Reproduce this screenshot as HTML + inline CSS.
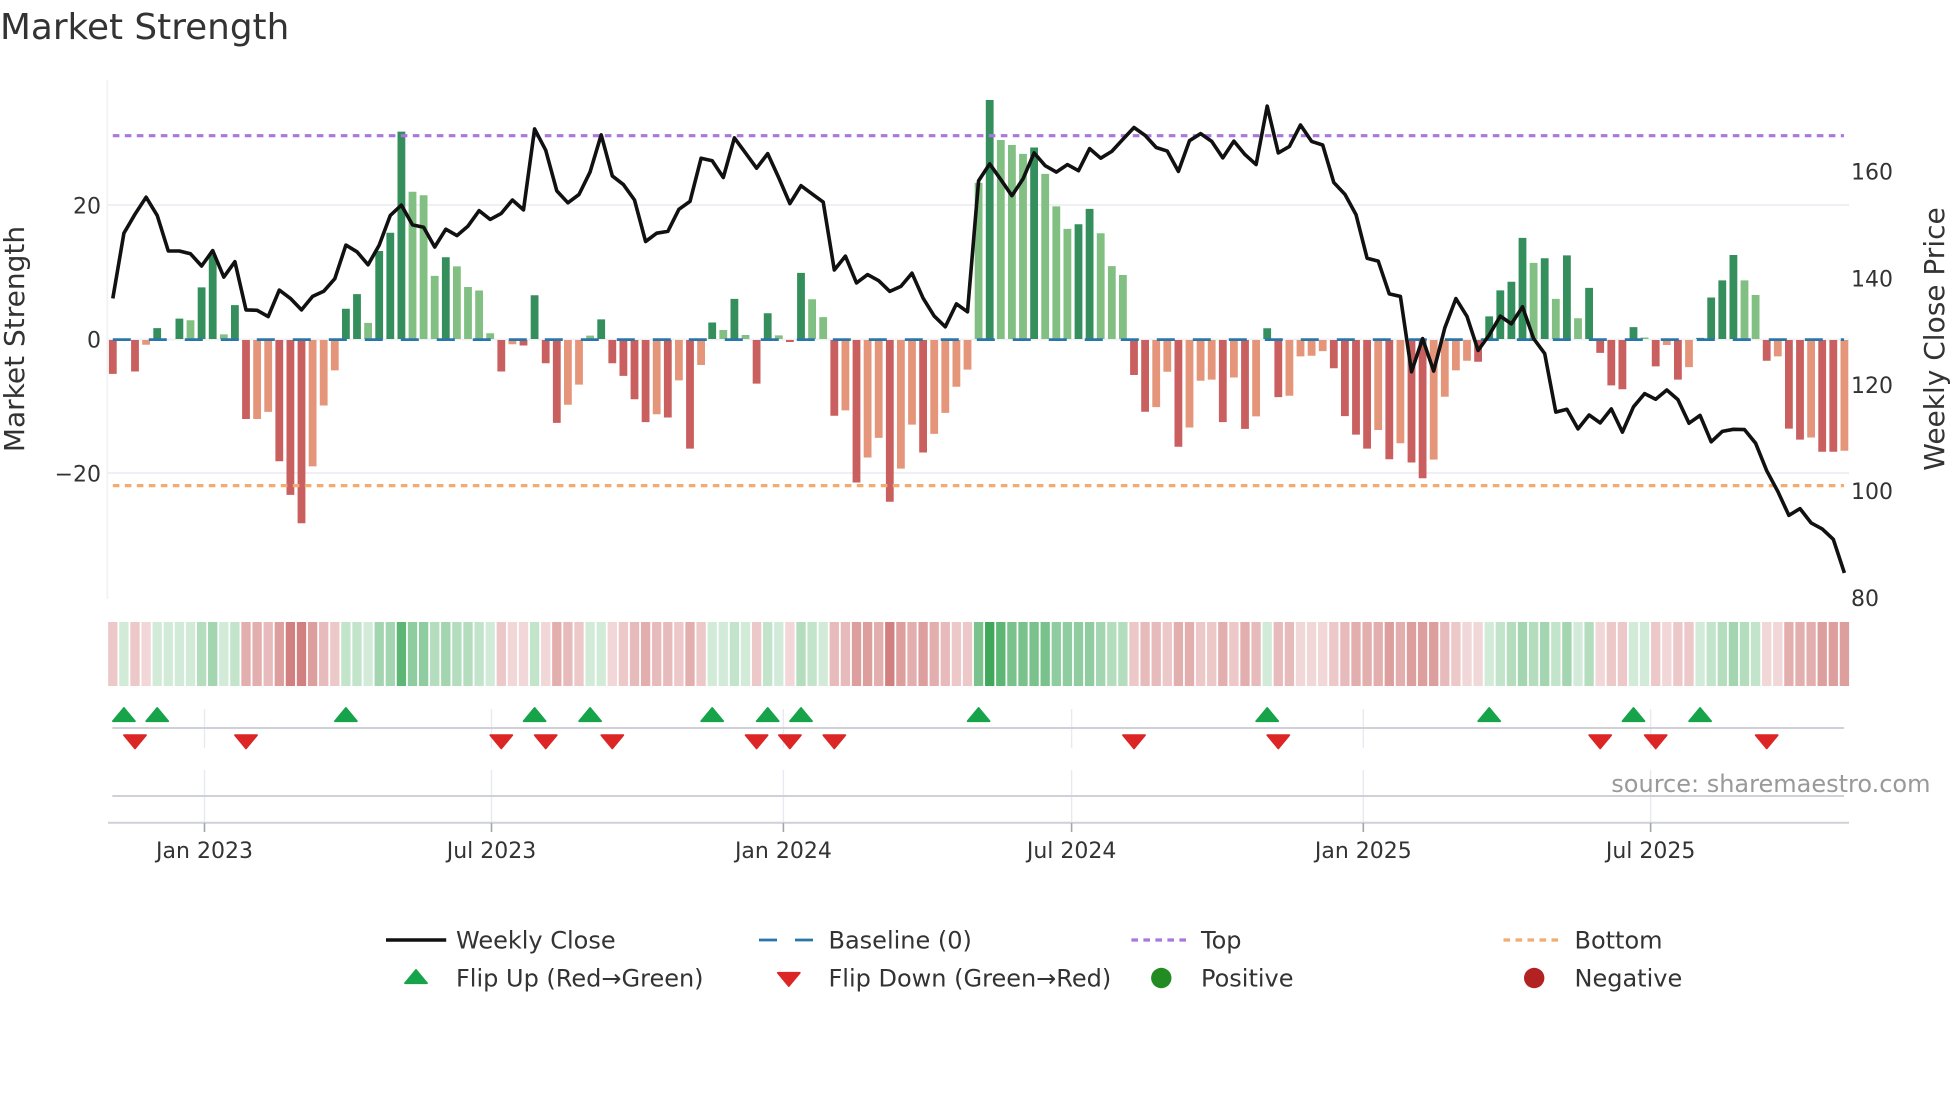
<!DOCTYPE html>
<html><head><meta charset="utf-8"><title>Market Strength</title>
<style>
html,body{margin:0;padding:0;background:#fff;width:1960px;height:1102px;overflow:hidden}
svg{display:block}
text{font-family:"DejaVu Sans","Liberation Sans",sans-serif}
</style></head><body>
<svg width="1960" height="1102" viewBox="0 0 1960 1102" xmlns="http://www.w3.org/2000/svg">
<rect width="1960" height="1102" fill="#fff"/>
<text x="0" y="39" font-size="35.8" fill="#333">Market Strength</text>

<!-- grid -->
<path d="M107.3 80V599" stroke="#f0f1f3" stroke-width="1.7" fill="none"/>
<path d="M107 205H1849M107 473H1849M107 339.5H1849" stroke="#eef0f5" stroke-width="2" fill="none"/>

<!-- bars -->
<g transform="translate(112.8 0) scale(11.1 1)" fill="none" stroke-width=".703">
<path stroke="#2e8b57" stroke-opacity=".97" d="M4 339V328.1M6 339V318.6M8 339V287.4M9 339V254.9M11 339V305.1M21 339V308.7M22 339V294.1M24 339V251M25 339V232.8M26 339V131.6M30 339V257.3M38 339V295.3M44 339V319.4M54 339V322.5M56 339V298.9M59 339V313.2M62 339V272.9M79 339V100M83 339V147.5M87 339V224.3M88 339V208.9M104 339V328.2M124 339V316.4M125 339V290.4M126 339V281.8M127 339V237.9M129 339V258.2M131 339V255.4M133 339V287.9M137 339V327.1M143 339V337.9M144 339V297.5M145 339V280.4M146 339V255"/>
<path stroke="#82bf82" d="M7 339V320.2M10 339V334.4M23 339V322.9M27 339V191.7M28 339V195.3M29 339V275.9M31 339V266.4M32 339V287M33 339V290.5M34 339V333.2M43 339V335.6M55 339V330M57 339V335M60 339V335.4M63 339V299.3M64 339V317.1M78 339V182.9M80 339V140M81 339V145M82 339V153.9M84 339V173.9M85 339V206.4M86 339V228.9M89 339V233.2M90 339V266.1M91 339V275M128 339V262.9M130 339V298.9M132 339V318.2M138 339V337.5M147 339V280.4M148 339V295"/>
<path stroke="#c95f5f" d="M0 340V373.9M2 340V371.5M12 340V419M15 340V461.3M16 340V494.9M17 340V523.3M35 340V371.5M37 340V345.5M39 340V363.2M40 340V422.9M45 340V363.2M46 340V375.9M47 340V399.2M48 340V422.1M50 340V417.5M52 340V448.6M58 340V383.6M61 340V342M65 340V415.7M67 340V482.5M70 340V501.8M73 340V452.5M92 340V375M93 340V411.8M96 340V446.8M100 340V422.1M102 340V428.9M105 340V397.1M110 340V368.2M111 340V416.1M112 340V434.6M113 340V448.6M115 340V459.3M117 340V462.5M118 340V478.2M123 340V361.8M134 340V352.9M135 340V385.4M136 340V389.3M139 340V366.4M141 340V379.6M149 340V360.7M151 340V428.6M152 340V439.6M154 340V451.8M155 340V451.8"/>
<path stroke="#e5967a" d="M3 340V344.7M13 340V419M14 340V411.9M18 340V466.4M19 340V405.5M20 340V370.4M36 340V344.3M41 340V404.7M42 340V384.6M49 340V414.2M51 340V380.4M53 340V365M66 340V410.4M68 340V457.5M69 340V437.9M71 340V468.6M72 340V424.6M74 340V433.9M75 340V412.9M76 340V386.8M77 340V369.6M94 340V407.1M95 340V371.8M97 340V427.5M98 340V380.7M99 340V379.6M101 340V377.5M103 340V416.4M106 340V395.7M107 340V356.4M108 340V355.7M109 340V351.1M114 340V430M116 340V443.2M119 340V459.6M120 340V396.8M121 340V370.4M122 340V360.7M140 340V345M142 340V367.1M150 340V356.4M153 340V437.5M156 340V450.7"/>
</g>

<!-- baseline & thresholds -->
<path d="M112.8 339.6H1844" stroke="#2a76a8" stroke-width="2.8" stroke-dasharray="18 18" fill="none"/>
<path d="M112.8 135.7H1844" stroke="#a878dc" stroke-width="3.2" stroke-dasharray="6.6 5.4" fill="none"/>
<path d="M112.8 485.6H1844" stroke="#f2ab70" stroke-width="3.2" stroke-dasharray="6.6 5.4" fill="none"/>

<!-- price line -->
<polyline transform="translate(112.8 0) scale(11.1 1)" vector-effect="non-scaling-stroke" fill="none" stroke="#111" stroke-width="3.6" stroke-linejoin="round" points="0,298.4 1,233.2 2,214.2 3,197.2 4,215.4 5,251 6,251 7,253.8 8,266 9,250.6 10,277.1 11,261.7 12,309.9 13,310.3 14,316.6 15,290.1 16,298.4 17,309.9 18,296.4 19,291.3 20,278.7 21,245.1 22,251.8 23,264.8 24,245.1 25,215.4 26,205.1 27,224.9 28,227.3 29,247 30,229.2 31,235.6 32,226.1 33,210.7 34,219.4 35,213.4 36,200 37,209.9 38,128.9 39,150.2 40,190.9 41,202.8 42,194.5 43,171.9 44,134.8 45,175.9 46,184.6 47,200 48,241.5 49,233.2 50,231.4 51,209.3 52,201.4 53,158.2 54,160.7 55,177.5 56,137.9 57,152.9 58,168.2 59,153.6 60,177.9 61,203.6 62,185.7 63,193.9 64,202.1 65,270 66,256.1 67,282.9 68,274.6 69,280.7 70,291.4 71,286.4 72,273.2 73,298.2 74,316.1 75,326.8 76,303.9 77,311.8 78,180.7 79,163.9 80,179.6 81,195.7 82,178.9 83,152.9 84,165.7 85,172.1 86,164.6 87,170.7 88,148.6 89,158.2 90,151.4 91,139.3 92,127.5 93,135.4 94,147.5 95,151.1 96,171.4 97,140.7 98,133.6 99,141.4 100,157.9 101,141.1 102,154.6 103,164.6 104,106.1 105,152.9 106,146.4 107,125 108,141.4 109,145 110,182.5 111,194.3 112,214.6 113,258.2 114,261.1 115,293.9 116,296.4 117,371.8 118,338.6 119,371.1 120,327.9 121,298.6 122,316.4 123,350.4 124,335 125,316.1 126,323.9 127,306.8 128,338.6 129,353.6 130,412.1 131,409.3 132,428.9 133,415 134,422.9 135,408.9 136,432.1 137,406.8 138,393.6 139,399.3 140,390 141,399.6 142,423.2 143,415.4 144,441.8 145,431.4 146,429.3 147,429.6 148,443.2 149,470.7 150,491.4 151,515.4 152,508.6 153,522.9 154,528.9 155,539.3 156,572.9"/>

<!-- left y ticks -->
<g font-size="22" fill="#333" text-anchor="end">
<text x="101" y="213.5">20</text>
<text x="101" y="347.5">0</text>
<text x="101" y="481.5">−20</text>
</g>
<text transform="translate(24 339) rotate(-90)" font-size="28" fill="#333" text-anchor="middle">Market Strength</text>

<!-- right y ticks -->
<g font-size="22" fill="#333">
<text x="1851" y="179.3">160</text>
<text x="1851" y="286.3">140</text>
<text x="1851" y="392.8">120</text>
<text x="1851" y="499">100</text>
<text x="1851" y="606">80</text>
</g>
<text transform="translate(1944 339) rotate(-90)" font-size="28" fill="#333" text-anchor="middle">Weekly Close Price</text>

<!-- heat strip -->
<g transform="translate(112.8 0) scale(11.1 1)" fill="none" stroke-width=".84">
<g stroke="#b22222">
<path stroke-opacity=".18" d="M3 622V686M36 622V686M37 622V686M39 622V686M45 622V686M61 622V686M107 622V686M108 622V686M109 622V686M122 622V686M123 622V686M134 622V686M140 622V686M149 622V686M150 622V686"/>
<path stroke-opacity=".25" d="M0 622V686M2 622V686M20 622V686M35 622V686M42 622V686M46 622V686M51 622V686M53 622V686M58 622V686M76 622V686M77 622V686M92 622V686M95 622V686M98 622V686M99 622V686M101 622V686M110 622V686M121 622V686M135 622V686M136 622V686M139 622V686M141 622V686M142 622V686"/>
<path stroke-opacity=".31" d="M14 622V686M19 622V686M41 622V686M47 622V686M49 622V686M50 622V686M65 622V686M66 622V686M75 622V686M93 622V686M94 622V686M103 622V686M105 622V686M106 622V686M111 622V686M120 622V686"/>
<path stroke-opacity=".37" d="M12 622V686M13 622V686M40 622V686M48 622V686M52 622V686M69 622V686M72 622V686M74 622V686M96 622V686M97 622V686M100 622V686M102 622V686M112 622V686M113 622V686M114 622V686M116 622V686M151 622V686M152 622V686M153 622V686"/>
<path stroke-opacity=".44" d="M15 622V686M18 622V686M67 622V686M68 622V686M71 622V686M73 622V686M115 622V686M117 622V686M118 622V686M119 622V686M154 622V686M155 622V686M156 622V686"/>
<path stroke-opacity=".58" d="M16 622V686M17 622V686M70 622V686"/>
</g>
<g stroke="#1f9a3f">
<path stroke-opacity=".2" d="M1 622V686M4 622V686M5 622V686M6 622V686M7 622V686M10 622V686M23 622V686M34 622V686M43 622V686M44 622V686M54 622V686M55 622V686M57 622V686M60 622V686M64 622V686M104 622V686M124 622V686M132 622V686M137 622V686M138 622V686M143 622V686"/>
<path stroke-opacity=".27" d="M11 622V686M21 622V686M22 622V686M33 622V686M38 622V686M56 622V686M59 622V686M63 622V686M125 622V686M130 622V686M144 622V686M148 622V686"/>
<path stroke-opacity=".34" d="M8 622V686M29 622V686M31 622V686M32 622V686M62 622V686M90 622V686M91 622V686M126 622V686M128 622V686M133 622V686M145 622V686M147 622V686"/>
<path stroke-opacity=".41" d="M9 622V686M24 622V686M25 622V686M30 622V686M89 622V686M127 622V686M129 622V686M131 622V686M146 622V686"/>
<path stroke-opacity=".5" d="M27 622V686M28 622V686M85 622V686M86 622V686M87 622V686M88 622V686"/>
<path stroke-opacity=".6" d="M78 622V686M81 622V686M82 622V686M83 622V686M84 622V686"/>
<path stroke-opacity=".72" d="M26 622V686M80 622V686"/>
<path stroke-opacity=".86" d="M79 622V686"/>
</g>
</g>

<!-- lower panels grid -->
<path d="M204.5 709V748M491.5 709V748M783.4 709V748M1071.6 709V748M1363.3 709V748M1650.6 709V748M204.5 770V823M491.5 770V823M783.4 770V823M1071.6 770V823M1363.3 770V823M1650.6 770V823" stroke="#e8eaf1" stroke-width="1.4" fill="none"/>
<path d="M112.3 728H1844M112.3 796H1844M108 822.7H1849" stroke="#cfd1d7" stroke-width="2" fill="none"/>
<path d="M204.5 823V832M491.5 823V832M783.4 823V832M1071.6 823V832M1363.3 823V832M1650.6 823V832" stroke="#a3a5aa" stroke-width="1.6" fill="none"/>

<!-- flip markers -->
<defs>
<path id="u" d="M0 -13L-11 0.2H11Z" fill="#16a34a" stroke="#16a34a" stroke-width="1.8" stroke-linejoin="round"/>
<path id="d" d="M0 13L-11 -0.2H11Z" fill="#dc2626" stroke="#dc2626" stroke-width="1.8" stroke-linejoin="round"/>
</defs>
<g transform="translate(0 721)">
<use href="#u" x="123.9"/><use href="#u" x="157.2"/><use href="#u" x="345.9"/><use href="#u" x="534.6"/><use href="#u" x="590.1"/><use href="#u" x="712.2"/><use href="#u" x="767.7"/><use href="#u" x="801"/><use href="#u" x="978.6"/><use href="#u" x="1267.2"/><use href="#u" x="1489.2"/><use href="#u" x="1633.5"/><use href="#u" x="1700.1"/>
</g>
<g transform="translate(0 735.4)">
<use href="#d" x="135"/><use href="#d" x="246"/><use href="#d" x="501.3"/><use href="#d" x="545.7"/><use href="#d" x="612.3"/><use href="#d" x="756.6"/><use href="#d" x="789.9"/><use href="#d" x="834.3"/><use href="#d" x="1134"/><use href="#d" x="1278.3"/><use href="#d" x="1600.2"/><use href="#d" x="1655.7"/><use href="#d" x="1766.7"/>
</g>

<text x="1930.5" y="792" font-size="24" fill="#999" text-anchor="end">source: sharemaestro.com</text>

<!-- x ticks -->
<g font-size="22" fill="#333" text-anchor="middle">
<text x="204.5" y="858">Jan 2023</text>
<text x="491.5" y="858">Jul 2023</text>
<text x="783.4" y="858">Jan 2024</text>
<text x="1071.6" y="858">Jul 2024</text>
<text x="1363.3" y="858">Jan 2025</text>
<text x="1650.6" y="858">Jul 2025</text>
</g>

<!-- legend -->
<path d="M386 940H446.2" stroke="#111" stroke-width="3.6" fill="none"/>
<path d="M759 940H777M795 940H813" stroke="#2a76a8" stroke-width="2.8" fill="none"/>
<path d="M1131.4 940H1186" stroke="#a878dc" stroke-width="3.2" stroke-dasharray="6.6 5.4" fill="none"/>
<path d="M1503.5 940H1558" stroke="#f2ab70" stroke-width="3.2" stroke-dasharray="6.6 5.4" fill="none"/>
<use href="#u" x="416" y="983"/>
<use href="#d" x="788.8" y="973"/>
<circle cx="1161.3" cy="978" r="10.2" fill="#228b22"/>
<circle cx="1534.2" cy="978" r="10.2" fill="#b22222"/>
<g font-size="24" fill="#333">
<text x="456" y="948.5">Weekly Close</text>
<text x="828.5" y="948.5">Baseline (0)</text>
<text x="1201" y="948.5">Top</text>
<text x="1574.5" y="948.5">Bottom</text>
<text x="456" y="986.5">Flip Up (Red→Green)</text>
<text x="828.5" y="986.5">Flip Down (Green→Red)</text>
<text x="1201" y="986.5">Positive</text>
<text x="1574.5" y="986.5">Negative</text>
</g>
</svg>
</body></html>
